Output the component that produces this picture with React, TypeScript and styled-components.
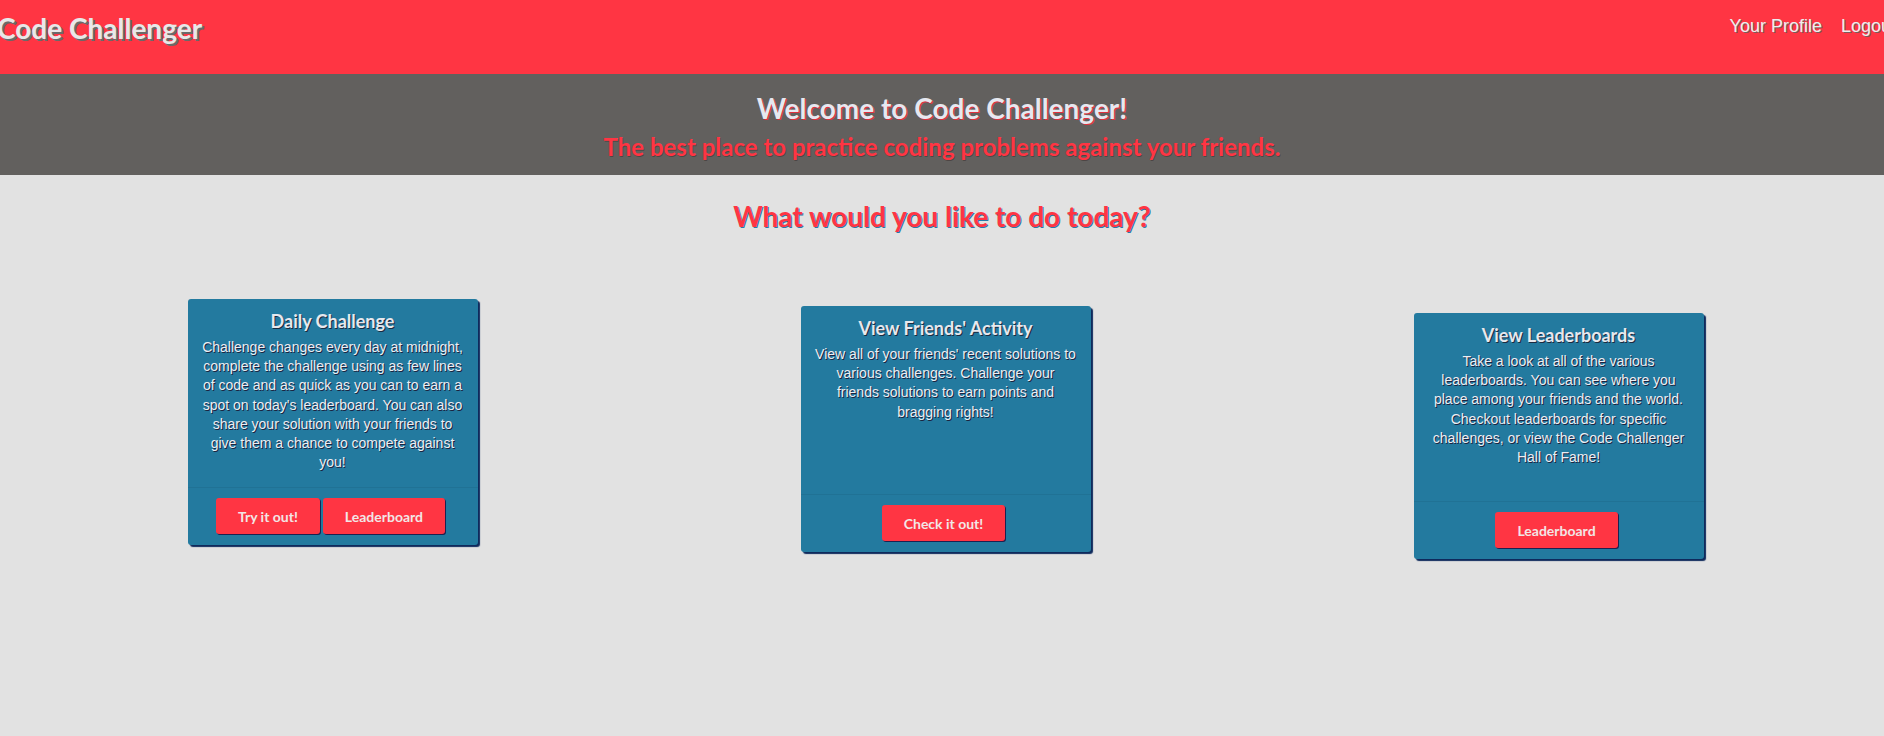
import React from "react";
import styled, { createGlobalStyle } from "styled-components";

const GlobalStyle = createGlobalStyle`
  html, body {
    margin: 0;
    padding: 0;
    overflow-x: hidden;
  }
  body {
    background: #e2e2e2;
    font-family: "Liberation Sans", Arial, sans-serif;
  }
`;

const Page = styled.div`
  min-height: 736px;
  background: #e2e2e2;
`;

const Header = styled.header`
  height: 74px;
  background: #ff3543;
  display: flex;
  justify-content: space-between;
  align-items: flex-start;
`;

const Brand = styled.div`
  margin-left: -3px;
  padding-top: 11px;
  font-family: Lato, "Liberation Sans", sans-serif;
  font-weight: 700;
  font-size: 28px;
  line-height: 34px;
  color: #e8e8e8;
  text-shadow: 2px 2px 0 #6a6a6a;
`;

const Nav = styled.nav`
  display: flex;
  gap: 19px;
  margin-right: -12px;
  padding-top: 16px;
`;

const NavLink = styled.a`
  font-family: "Liberation Sans", Arial, sans-serif;
  font-size: 18px;
  line-height: 21px;
  color: #eeeeee;
  text-decoration: none;
  text-shadow: 1px 1px 0 #7a5a5a;
`;

const Banner = styled.section`
  background: #62605e;
  padding: 17px 0 14px;
  text-align: center;
`;

const BannerTitle = styled.h1`
  margin: 0;
  font-family: Lato, "Liberation Sans", sans-serif;
  font-weight: 700;
  font-size: 28px;
  line-height: 34px;
  color: #e6e8f0;
  text-shadow: 1px 1px 0 #e0303e;
`;

const BannerSub = styled.h2`
  margin: 8px 0 0;
  font-family: Lato, "Liberation Sans", sans-serif;
  font-weight: 700;
  font-size: 24px;
  line-height: 28px;
  color: #ff3543;
  text-shadow: 1px 1px 0 rgba(40, 20, 20, 0.35);
`;

const Question = styled.h2`
  margin: 25px 0 0;
  text-align: center;
  font-family: Lato, "Liberation Sans", sans-serif;
  font-weight: 700;
  font-size: 28px;
  line-height: 33px;
  color: #ff3543;
  text-shadow: 1px 1px 0 #2a7aa8;
`;

const CardRow = styled.div`
  display: grid;
  grid-template-columns: repeat(3, 613px);
  padding-left: 26px;
  margin-top: 66px;
  align-items: start;
`;

const Card = styled.div<{ $offset: number }>`
  justify-self: center;
  width: 290px;
  margin-top: ${(p) => p.$offset}px;
  background: #237a9f;
  border-radius: 3px;
  box-shadow: 2px 2px 1px #0f2a5c;
  display: flex;
  flex-direction: column;
`;

const CardBody = styled.div`
  height: 188px;
  box-sizing: border-box;
  padding: 11px 14px 0;
  text-align: center;
`;

const CardTitle = styled.h3`
  margin: 0;
  font-family: Lato, "Liberation Sans", sans-serif;
  font-weight: 700;
  font-size: 18px;
  line-height: 22px;
  color: #e6e8ee;
  text-shadow: 1px 1px 0 #1a2a40;
`;

const CardText = styled.p`
  margin: 6px 0 0;
  font-family: "Liberation Sans", Arial, sans-serif;
  font-size: 14px;
  line-height: 19.2px;
  color: #eceef4;
  text-shadow: 1px 1px 0 #1c2440;
`;

const CardFooter = styled.div`
  border-top: 1px solid rgba(0, 0, 0, 0.06);
  padding: 10px 4px 11px 0;
  display: flex;
  justify-content: center;
  gap: 3px;
`;

const Button = styled.button`
  height: 36px;
  padding: 0 22px;
  border: none;
  border-radius: 3px;
  background: #ff3543;
  box-shadow: 1px 1px 0 #1d2050;
  font-family: Lato, "Liberation Sans", sans-serif;
  font-weight: 700;
  font-size: 14px;
  color: #f2e6e6;
  cursor: pointer;
`;

type CardData = {
  title: string;
  text: string;
  buttons: string[];
  offset: number;
};

const cards: CardData[] = [
  {
    title: "Daily Challenge",
    text:
      "Challenge changes every day at midnight, complete the challenge using as few lines of code and as quick as you can to earn a spot on today's leaderboard. You can also share your solution with your friends to give them a chance to compete against you!",
    buttons: ["Try it out!", "Leaderboard"],
    offset: 0,
  },
  {
    title: "View Friends' Activity",
    text:
      "View all of your friends' recent solutions to various challenges. Challenge your friends solutions to earn points and bragging rights!",
    buttons: ["Check it out!"],
    offset: 7,
  },
  {
    title: "View Leaderboards",
    text:
      "Take a look at all of the various leaderboards. You can see where you place among your friends and the world. Checkout leaderboards for specific challenges, or view the Code Challenger Hall of Fame!",
    buttons: ["Leaderboard"],
    offset: 14,
  },
];

export default function App() {
  return (
    <Page>
      <GlobalStyle />
      <Header>
        <Brand>Code Challenger</Brand>
        <Nav>
          <NavLink href="#">Your Profile</NavLink>
          <NavLink href="#">Logout</NavLink>
        </Nav>
      </Header>
      <Banner>
        <BannerTitle>Welcome to Code Challenger!</BannerTitle>
        <BannerSub>The best place to practice coding problems against your friends.</BannerSub>
      </Banner>
      <Question>What would you like to do today?</Question>
      <CardRow>
        {cards.map((c) => (
          <Card key={c.title} $offset={c.offset}>
            <CardBody>
              <CardTitle>{c.title}</CardTitle>
              <CardText>{c.text}</CardText>
            </CardBody>
            <CardFooter>
              {c.buttons.map((b) => (
                <Button key={b}>{b}</Button>
              ))}
            </CardFooter>
          </Card>
        ))}
      </CardRow>
    </Page>
  );
}
